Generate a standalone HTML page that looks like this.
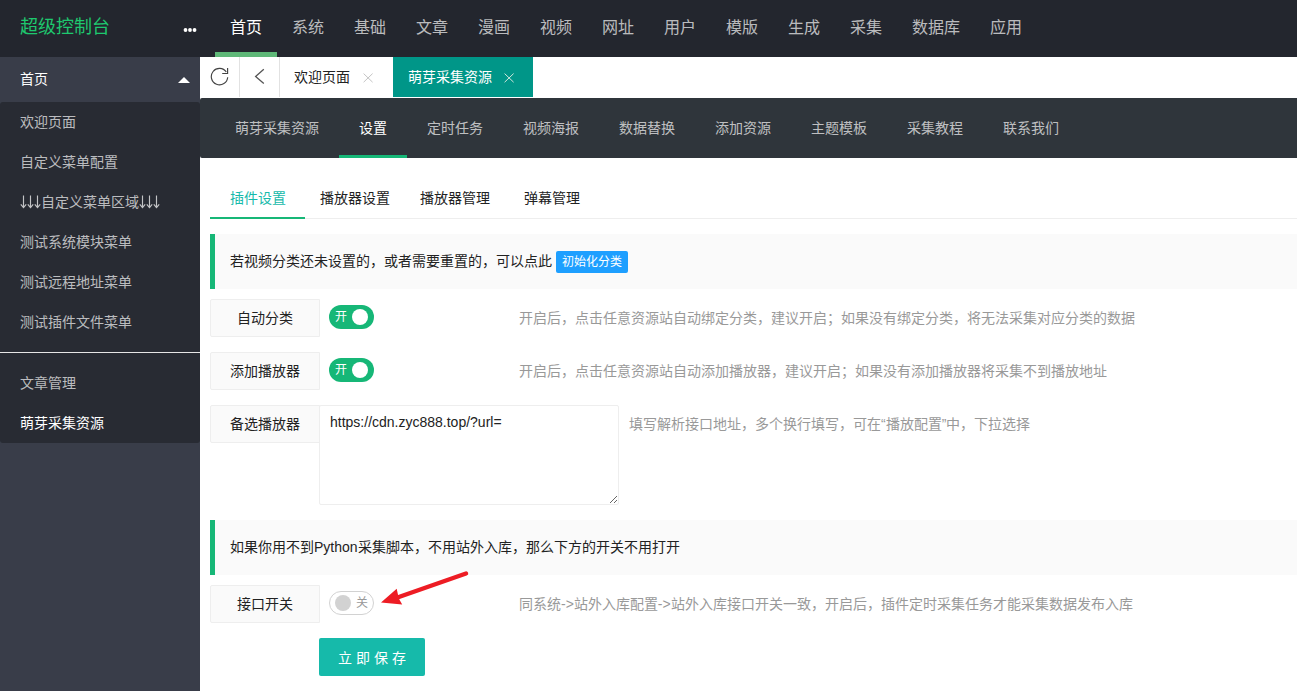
<!DOCTYPE html>
<html lang="zh-CN"><head><meta charset="utf-8">
<style>
*{margin:0;padding:0;box-sizing:border-box}
html,body{width:1297px;height:691px;overflow:hidden;background:#fff;font-family:"Liberation Sans",sans-serif;font-size:14px;color:#222}
.abs{position:absolute}
#hdr{left:0;top:0;width:1297px;height:57px;background:#23262E}
#logo{left:20px;top:12px;font-size:18px;line-height:30px;color:#1ec86e;white-space:nowrap}
#dots{left:183px;top:28px;width:14px;height:4px}
.tn{top:12px;height:32px;line-height:32px;font-size:16px;color:rgba(255,255,255,.7);white-space:nowrap}
.tn.on{color:#fff}
#tnbar{left:215px;top:52px;width:62px;height:5px;background:#5FB878}
#side{left:0;top:57px;width:200px;height:634px;background:#393D49}
#side .top{left:0;top:0;width:200px;height:45px;color:#fff;line-height:45px;padding-left:20px}
#side .tri{left:178px;top:20px;width:0;height:0;border-left:6px solid transparent;border-right:6px solid transparent;border-bottom:6px solid #fff}
#side .child{left:0;top:45px;width:200px;height:341px;background:#282B33;border-radius:3px}
.si{left:20px;height:40px;line-height:40px;color:rgba(255,255,255,.7);white-space:nowrap}
#hr{left:0;top:250px;width:200px;height:1px;background:#e6e6e6}
#tabs{left:200px;top:57px;width:1097px;height:41px;background:#fff}
.tsep{top:0;width:1px;height:40px;background:#e2e2e2}
#tealtab{left:193px;top:0;width:140px;height:40px;background:#009688}
#subnav{left:200px;top:98px;width:1097px;height:60px;background:#2F353B;border-radius:2px 0 0 2px}
.sn{top:0;line-height:60px;color:rgba(255,255,255,.7);white-space:nowrap}
.sn.on{color:#fff}
#snbar{left:139px;top:57px;width:68px;height:3px;background:#16b777}
.tt{top:178px;line-height:40px;white-space:nowrap;color:#222}
#ttline{left:210px;top:218px;width:1087px;height:1px;background:#eee}
#ttbar{left:210px;top:217px;width:95px;height:2px;background:#16b777}
.quote{left:210px;width:1087px;height:55px;background:#FAFAFA;border-left:5px solid #16b777;padding-left:15px;line-height:55px;white-space:nowrap;color:#222}
.lbl{left:210px;width:110px;height:38px;background:#FAFAFA;border:1px solid #eee;border-radius:2px 0 0 2px;text-align:center;line-height:36px;color:#222}
.sw{left:329px;width:45px;height:24px;border-radius:12px}
.sw.on{background:#16b777}
.sw.on i{position:absolute;left:23px;top:4px;width:16px;height:16px;border-radius:8px;background:#fff}
.sw.on em{position:absolute;left:6px;top:0;line-height:24px;font-size:12px;color:#fff;font-style:normal}
.sw.off{background:#fff;border:1px solid #d2d2d2}
.sw.off i{position:absolute;left:5px;top:3px;width:16px;height:16px;border-radius:8px;background:#d2d2d2}
.sw.off em{position:absolute;left:26px;top:0;line-height:22px;font-size:12px;color:#999;font-style:normal}
.aux{line-height:20px;color:#999;white-space:nowrap}
#ta{left:319px;top:405px;width:300px;height:100px;border:1px solid #eee;border-radius:2px;background:#fff;padding:6px 10px;line-height:20px;color:#222}
#save{left:319px;top:638px;width:106px;height:38px;background:#16baaa;border-radius:2px;color:#fff;line-height:40px;text-align:center;letter-spacing:4px;padding-left:4px}
#init{display:inline-block;vertical-align:middle;height:22px;line-height:22px;padding:0 6px;background:#1E9FFF;color:#fff;font-size:12px;border-radius:2px;margin-left:4px}
</style></head><body>
<div id="hdr" class="abs">
  <div id="logo" class="abs">超级控制台</div>
  <svg id="dots" class="abs" viewBox="0 0 14 4"><circle cx="2.5" cy="2" r="1.9" fill="#fff"/><circle cx="7" cy="2" r="1.9" fill="#fff"/><circle cx="11.55" cy="2" r="1.9" fill="#fff"/></svg>
  <div class="abs tn on" style="left:230px">首页</div>
  <div class="abs tn" style="left:292px">系统</div>
  <div class="abs tn" style="left:354px">基础</div>
  <div class="abs tn" style="left:416px">文章</div>
  <div class="abs tn" style="left:478px">漫画</div>
  <div class="abs tn" style="left:540px">视频</div>
  <div class="abs tn" style="left:602px">网址</div>
  <div class="abs tn" style="left:664px">用户</div>
  <div class="abs tn" style="left:726px">模版</div>
  <div class="abs tn" style="left:788px">生成</div>
  <div class="abs tn" style="left:850px">采集</div>
  <div class="abs tn" style="left:912px">数据库</div>
  <div class="abs tn" style="left:990px">应用</div>
  <div id="tnbar" class="abs"></div>
</div>
<div id="side" class="abs">
  <div class="abs top">首页</div>
  <div class="abs tri"></div>
  <div class="abs child">
    <div class="abs si" style="top:0">欢迎页面</div>
    <div class="abs si" style="top:40px">自定义菜单配置</div>
    <div class="abs si" style="top:80px"><svg width="7" height="14" viewBox="0 0 7 14" style="vertical-align:-2px"><path d="M3.5 0.5V12.6M0.8 9.3L3.5 12.6L6.2 9.3" fill="none" stroke="rgba(255,255,255,.72)" stroke-width="1.15"/></svg><svg width="7" height="14" viewBox="0 0 7 14" style="vertical-align:-2px"><path d="M3.5 0.5V12.6M0.8 9.3L3.5 12.6L6.2 9.3" fill="none" stroke="rgba(255,255,255,.72)" stroke-width="1.15"/></svg><svg width="7" height="14" viewBox="0 0 7 14" style="vertical-align:-2px"><path d="M3.5 0.5V12.6M0.8 9.3L3.5 12.6L6.2 9.3" fill="none" stroke="rgba(255,255,255,.72)" stroke-width="1.15"/></svg>自定义菜单区域<svg width="7" height="14" viewBox="0 0 7 14" style="vertical-align:-2px"><path d="M3.5 0.5V12.6M0.8 9.3L3.5 12.6L6.2 9.3" fill="none" stroke="rgba(255,255,255,.72)" stroke-width="1.15"/></svg><svg width="7" height="14" viewBox="0 0 7 14" style="vertical-align:-2px"><path d="M3.5 0.5V12.6M0.8 9.3L3.5 12.6L6.2 9.3" fill="none" stroke="rgba(255,255,255,.72)" stroke-width="1.15"/></svg><svg width="7" height="14" viewBox="0 0 7 14" style="vertical-align:-2px"><path d="M3.5 0.5V12.6M0.8 9.3L3.5 12.6L6.2 9.3" fill="none" stroke="rgba(255,255,255,.72)" stroke-width="1.15"/></svg></div>
    <div class="abs si" style="top:120px">测试系统模块菜单</div>
    <div class="abs si" style="top:160px">测试远程地址菜单</div>
    <div class="abs si" style="top:200px">测试插件文件菜单</div>
    <div id="hr" class="abs"></div>
    <div class="abs si" style="top:261px">文章管理</div>
    <div class="abs si" style="top:301px;color:#fff">萌芽采集资源</div>
  </div>
</div>
<div id="tabs" class="abs">
  <svg class="abs" style="left:10px;top:10px" width="20" height="20" viewBox="0 0 20 20"><path d="M17.7 10.2 A8.2 8.2 0 1 1 16.3 5" fill="none" stroke="#444" stroke-width="1.15"/><path d="M12.2 6.45 L17.6 6.45 L17.6 1" fill="none" stroke="#444" stroke-width="1.15"/></svg>
  <div class="abs tsep" style="left:39px"></div>
  <svg class="abs" style="left:50px;top:10px" width="20" height="20" viewBox="0 0 20 20"><path d="M13.8 2.2 L5.6 9.4 L13.8 16.6" fill="none" stroke="#555" stroke-width="1.3"/></svg>
  <div class="abs tsep" style="left:79px"></div>
  <div class="abs" style="left:94px;top:0;line-height:40px;color:#222">欢迎页面</div>
  <svg class="abs" style="left:163px;top:16px" width="11" height="10" viewBox="0 0 11 10"><path d="M0.6 0.6L9.6 9.2M9.6 0.6L0.6 9.2" stroke="#c4c4c4" stroke-width="1"/></svg>
  <div id="tealtab" class="abs">
    <div class="abs" style="left:15px;top:0;line-height:40px;color:#fff">萌芽采集资源</div>
    <svg class="abs" style="left:111px;top:16px" width="11" height="10" viewBox="0 0 11 10"><path d="M0.6 0.6L9.6 9.2M9.6 0.6L0.6 9.2" stroke="#d2e6dc" stroke-width="1"/></svg>
  </div>
</div>
<div id="subnav" class="abs">
  <div class="abs sn" style="left:35px">萌芽采集资源</div>
  <div class="abs sn on" style="left:159px">设置</div>
  <div class="abs sn" style="left:227px">定时任务</div>
  <div class="abs sn" style="left:323px">视频海报</div>
  <div class="abs sn" style="left:419px">数据替换</div>
  <div class="abs sn" style="left:515px">添加资源</div>
  <div class="abs sn" style="left:611px">主题模板</div>
  <div class="abs sn" style="left:707px">采集教程</div>
  <div class="abs sn" style="left:803px">联系我们</div>
  <div id="snbar" class="abs"></div>
</div>
<div class="abs tt" style="left:230px;color:#16baaa">插件设置</div>
<div class="abs tt" style="left:320px">播放器设置</div>
<div class="abs tt" style="left:420px">播放器管理</div>
<div class="abs tt" style="left:524px">弹幕管理</div>
<div id="ttline" class="abs"></div>
<div id="ttbar" class="abs"></div>

<div class="abs quote" style="top:234px">若视频分类还未设置的，或者需要重置的，可以点此<span id="init">初始化分类</span></div>

<div class="abs lbl" style="top:299px">自动分类</div>
<div class="abs sw on" style="top:305px"><em>开</em><i></i></div>
<div class="abs aux" style="left:519px;top:308px">开启后，点击任意资源站自动绑定分类，建议开启；如果没有绑定分类，将无法采集对应分类的数据</div>

<div class="abs lbl" style="top:352px">添加播放器</div>
<div class="abs sw on" style="top:358px"><em>开</em><i></i></div>
<div class="abs aux" style="left:519px;top:361px">开启后，点击任意资源站自动添加播放器，建议开启；如果没有添加播放器将采集不到播放地址</div>

<div class="abs lbl" style="top:405px">备选播放器</div>
<div id="ta" class="abs">https://cdn.zyc888.top/?url=</div>
<svg class="abs" style="left:600px;top:490px" width="20" height="15" fill="#666"><rect x="10" y="12" width="1" height="1"/><rect x="11" y="11" width="1" height="1"/><rect x="12" y="10" width="1" height="1"/><rect x="13" y="9" width="1" height="1"/><rect x="14" y="8" width="1" height="1"/><rect x="15" y="7" width="1" height="1"/><rect x="16" y="6" width="1" height="1"/><rect x="14" y="12" width="1" height="1"/><rect x="15" y="11" width="1" height="1"/><rect x="16" y="10" width="1" height="1"/></svg>
<div class="abs aux" style="left:629px;top:414px">填写解析接口地址，多个换行填写，可在“播放配置”中，下拉选择</div>

<div class="abs quote" style="top:520px">如果你用不到Python采集脚本，不用站外入库，那么下方的开关不用打开</div>

<div class="abs lbl" style="top:585px">接口开关</div>
<div class="abs sw off" style="top:591px"><i></i><em>关</em></div>
<div class="abs aux" style="left:519px;top:594px">同系统->站外入库配置->站外入库接口开关一致，开启后，插件定时采集任务才能采集数据发布入库</div>

<div id="save" class="abs">立即保存</div>

<svg class="abs" style="left:0;top:0" width="1297" height="691" viewBox="0 0 1297 691">
  <line x1="466" y1="573.5" x2="396" y2="598" stroke="#ED1C24" stroke-width="4.5" stroke-linecap="round"/>
  <path d="M381 602.4 L396.7 588.7 L398.8 598.5 L402.2 604.5 Z" fill="#ED1C24"/>
</svg>
</body></html>
